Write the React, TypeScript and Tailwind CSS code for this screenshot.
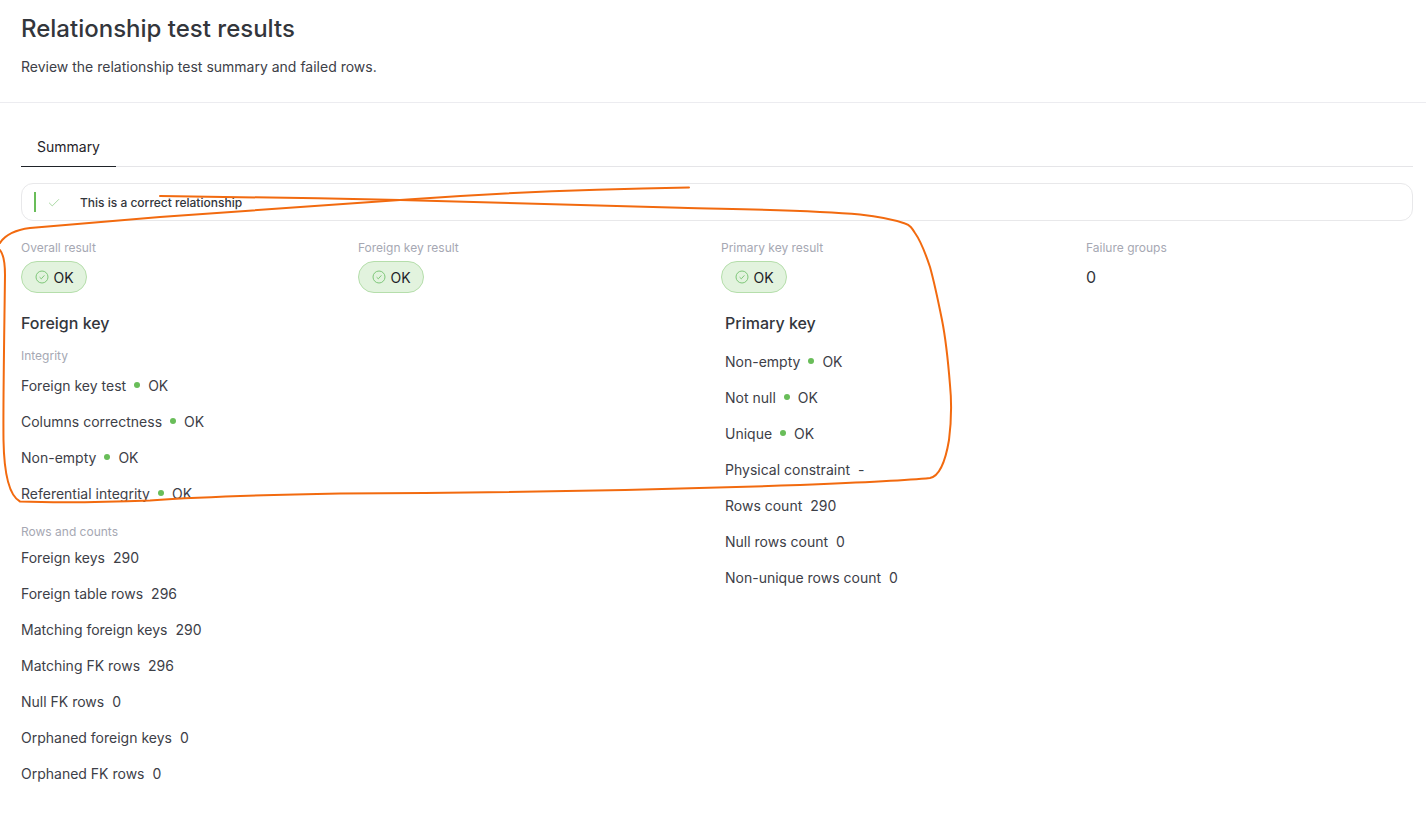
import { Check } from "lucide-react";

function OkBadge() {
  return (
    <div className="mt-[5px] flex h-8 w-[66px] items-center justify-center gap-1 rounded-full border border-[#b5deab] bg-[#e2f3de] pl-px text-sm text-[#1f2329]">
      <svg width="14" height="14" viewBox="0 0 14 14" fill="none" stroke="#7fc77a" strokeWidth="1">
        <circle cx="7" cy="7" r="6" />
        <path d="M4.6 7.2 6.3 8.8 9.4 5.4" />
      </svg>
      <span className="mt-px">OK</span>
    </div>
  );
}

function ResultCol({ label }: { label: string }) {
  return (
    <div>
      <div className="text-xs leading-4 text-[#a6a8b3]">{label}</div>
      <OkBadge />
    </div>
  );
}

function Row({ label, value, ok }: { label: string; value: string; ok?: boolean }) {
  return (
    <div className="flex h-9 items-center text-sm text-[#3d4047]">
      <span>{label}</span>
      {ok ? (
        <span className="mx-2 mb-[3px] h-1.5 w-1.5 rounded-full bg-[#69bd59]" />
      ) : (
        <span className="w-2" />
      )}
      <span>{value}</span>
    </div>
  );
}

export default function App() {
  return (
    <div className="relative h-[817px] overflow-hidden bg-white font-['Inter',sans-serif]">
      {/* Header */}
      <div className="h-[103px] border-b border-[#ececf0] px-[21px] pt-[13px]">
        <h1 className="text-2xl leading-8 font-medium text-[#33363c]">Relationship test results</h1>
        <p className="mt-3 text-sm leading-5 text-[#3d4047]">
          Review the relationship test summary and failed rows.
        </p>
      </div>

      <div className="px-[21px] pr-[13px]">
        {/* Tabs */}
        <div className="mt-[26px] flex h-[38px] border-b border-[#e5e5e8]">
          <div className="-mb-px flex w-[95px] items-center justify-center border-b border-[#1f2329] pb-0.5 text-sm text-[#1f2329]">
            Summary
          </div>
        </div>

        {/* Alert */}
        <div className="mt-4 flex h-[38px] items-center rounded-xl border border-[#e8e8ea] pl-3">
          <span className="h-5 w-0.5 bg-[#69bd59]" />
          <Check className="mt-0.5 ml-[11px] h-3.5 w-3.5 text-[#8acb80]" strokeWidth={1.25} />
          <span className="mt-0.5 ml-[19px] text-xs font-medium text-[#33363c]">This is a correct relationship</span>
        </div>

        {/* Results */}
        <div className="mt-[19px] grid grid-cols-[337px_363px_365px_1fr]">
          <ResultCol label="Overall result" />
          <ResultCol label="Foreign key result" />
          <ResultCol label="Primary key result" />
          <div>
            <div className="text-xs leading-4 text-[#a6a8b3]">Failure groups</div>
            <div className="mt-[11px] text-base leading-5 text-[#33363c]">0</div>
          </div>
        </div>

        <div className="mt-[18px] grid grid-cols-[704px_1fr]">
          {/* Foreign key */}
          <div>
            <h2 className="text-base leading-6 font-medium text-[#33363c]">Foreign key</h2>
            <div className="mt-[13px] text-xs leading-4 text-[#a6a8b3]">Integrity</div>
            <div className="mt-[4px]">
              <Row label="Foreign key test" value="OK" ok />
              <Row label="Columns correctness" value="OK" ok />
              <Row label="Non-empty" value="OK" ok />
              <Row label="Referential integrity" value="OK" ok />
            </div>
            <div className="mt-[12px] text-xs leading-4 text-[#a6a8b3]">Rows and counts</div>
            <div>
              <Row label="Foreign keys" value="290" />
              <Row label="Foreign table rows" value="296" />
              <Row label="Matching foreign keys" value="290" />
              <Row label="Matching FK rows" value="296" />
              <Row label="Null FK rows" value="0" />
              <Row label="Orphaned foreign keys" value="0" />
              <Row label="Orphaned FK rows" value="0" />
            </div>
          </div>

          {/* Primary key */}
          <div>
            <h2 className="text-base leading-6 font-medium text-[#33363c]">Primary key</h2>
            <div className="mt-[9px]">
              <Row label="Non-empty" value="OK" ok />
              <Row label="Not null" value="OK" ok />
              <Row label="Unique" value="OK" ok />
              <Row label="Physical constraint" value="-" />
              <Row label="Rows count" value="290" />
              <Row label="Null rows count" value="0" />
              <Row label="Non-unique rows count" value="0" />
            </div>
          </div>
        </div>
      </div>

      {/* Hand-drawn annotation over the page */}
      <svg className="pointer-events-none absolute inset-0" width="1426" height="817" fill="none" stroke="#f26a0f" strokeWidth="2" strokeLinecap="round">
        <path d="M689 187.500C590 189 480 194 400 200C320 206 240 212 160 217C110 221 70 225 30 228C15 230 5 235 0 243" />
        <path d="M0 250C4 255 5 262 5 275C4.500 320 3 400 3.500 440C4 470 8 495 20 501.500C60 503 110 502 150 500.500C200 497 260 495 340 493.500C500 493 650 490 800 485C850 483 900 481 930 478C940 476 946 458 949 440C951.500 420 951.500 400 950 385C948 360 945 335 942 320C938 300 935 285 930 267C926 255 920 240 915 233C912 228 910 225 905 223.500C895 220 880 216.700 860 214.500C810 210 750 209.500 680 207.700C600 205 500 202 400 200C320 198 230 197 160 196" />
      </svg>
    </div>
  );
}
